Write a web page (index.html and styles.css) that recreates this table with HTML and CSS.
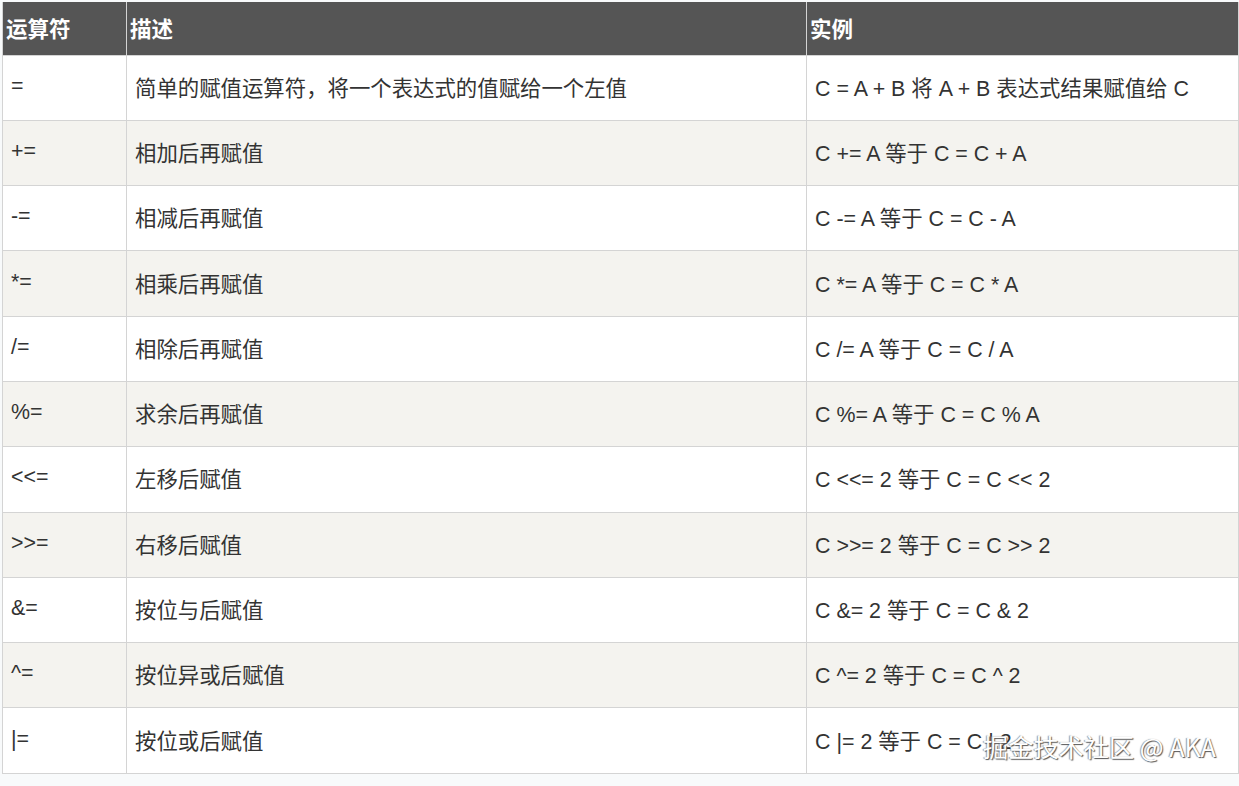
FILE: index.html
```html
<!DOCTYPE html>
<html lang="zh">
<head>
<meta charset="utf-8">
<title>赋值运算符</title>
<link rel="stylesheet" href="styles.css">
</head>
<body>
<div class="page">
  <table class="ops">
    <colgroup>
      <col class="c1"><col class="c2"><col class="c3">
    </colgroup>
    <thead>
      <tr><th>运算符</th><th>描述</th><th>实例</th></tr>
    </thead>
    <tbody>
      <tr><td>=</td><td>简单的赋值运算符，将一个表达式的值赋给一个左值</td><td>C = A + B 将 A + B 表达式结果赋值给 C</td></tr>
      <tr><td>+=</td><td>相加后再赋值</td><td>C += A 等于 C = C + A</td></tr>
      <tr><td>-=</td><td>相减后再赋值</td><td>C -= A 等于 C = C - A</td></tr>
      <tr><td>*=</td><td>相乘后再赋值</td><td>C *= A 等于 C = C * A</td></tr>
      <tr><td>/=</td><td>相除后再赋值</td><td>C /= A 等于 C = C / A</td></tr>
      <tr><td>%=</td><td>求余后再赋值</td><td>C %= A 等于 C = C % A</td></tr>
      <tr><td>&lt;&lt;=</td><td>左移后赋值</td><td>C &lt;&lt;= 2 等于 C = C &lt;&lt; 2</td></tr>
      <tr><td>&gt;&gt;=</td><td>右移后赋值</td><td>C &gt;&gt;= 2 等于 C = C &gt;&gt; 2</td></tr>
      <tr><td>&amp;=</td><td>按位与后赋值</td><td>C &amp;= 2 等于 C = C &amp; 2</td></tr>
      <tr><td>^=</td><td>按位异或后赋值</td><td>C ^= 2 等于 C = C ^ 2</td></tr>
      <tr><td>|=</td><td>按位或后赋值</td><td>C |= 2 等于 C = C | 2</td></tr>
    </tbody>
  </table>
  <div class="watermark">掘金技术社区 @ AKA</div>
</div>
</body>
</html>
```
FILE: styles.css
```css
html, body {
  margin: 0;
  padding: 0;
  background: #f8fafb;
}
body {
  font-family: "Liberation Sans", "Noto Sans CJK SC", sans-serif;
  color: #333;
}
.page {
  position: relative;
  width: 1239px;
  height: 786px;
  padding: 2px 0 0 2px;
  box-sizing: border-box;
}
.ops {
  border-collapse: collapse;
  width: 1236px;
  table-layout: fixed;
  background: #fff;
}
.c1 { width: 124px; }
.c2 { width: 680px; }
.c3 { width: 432px; }
.ops th {
  background: #555;
  color: #fff;
  font-weight: bold;
  font-size: 21.5px;
  text-align: left;
  height: 53px;
  padding: 0 3px 2px;
  border: 1px solid #d4d4d4;
  border-top: none;
  box-sizing: border-box;
}
.ops td {
  font-size: 21.4px;
  height: 65.3px;
  padding: 0 8px 3px;
  border: 1px solid #d4d4d4;
  box-sizing: border-box;
  vertical-align: middle;
}
.ops tbody tr:nth-child(even) td {
  background: #f4f3ef;
}
.watermark {
  position: absolute;
  left: 983px;
  top: 728px;
  font-family: "Noto Sans CJK SC", sans-serif;
  font-size: 25.2px;
  color: #fff;
  text-shadow: 1px 1px 1px #555, -1px 0 1px #999;
}
```
